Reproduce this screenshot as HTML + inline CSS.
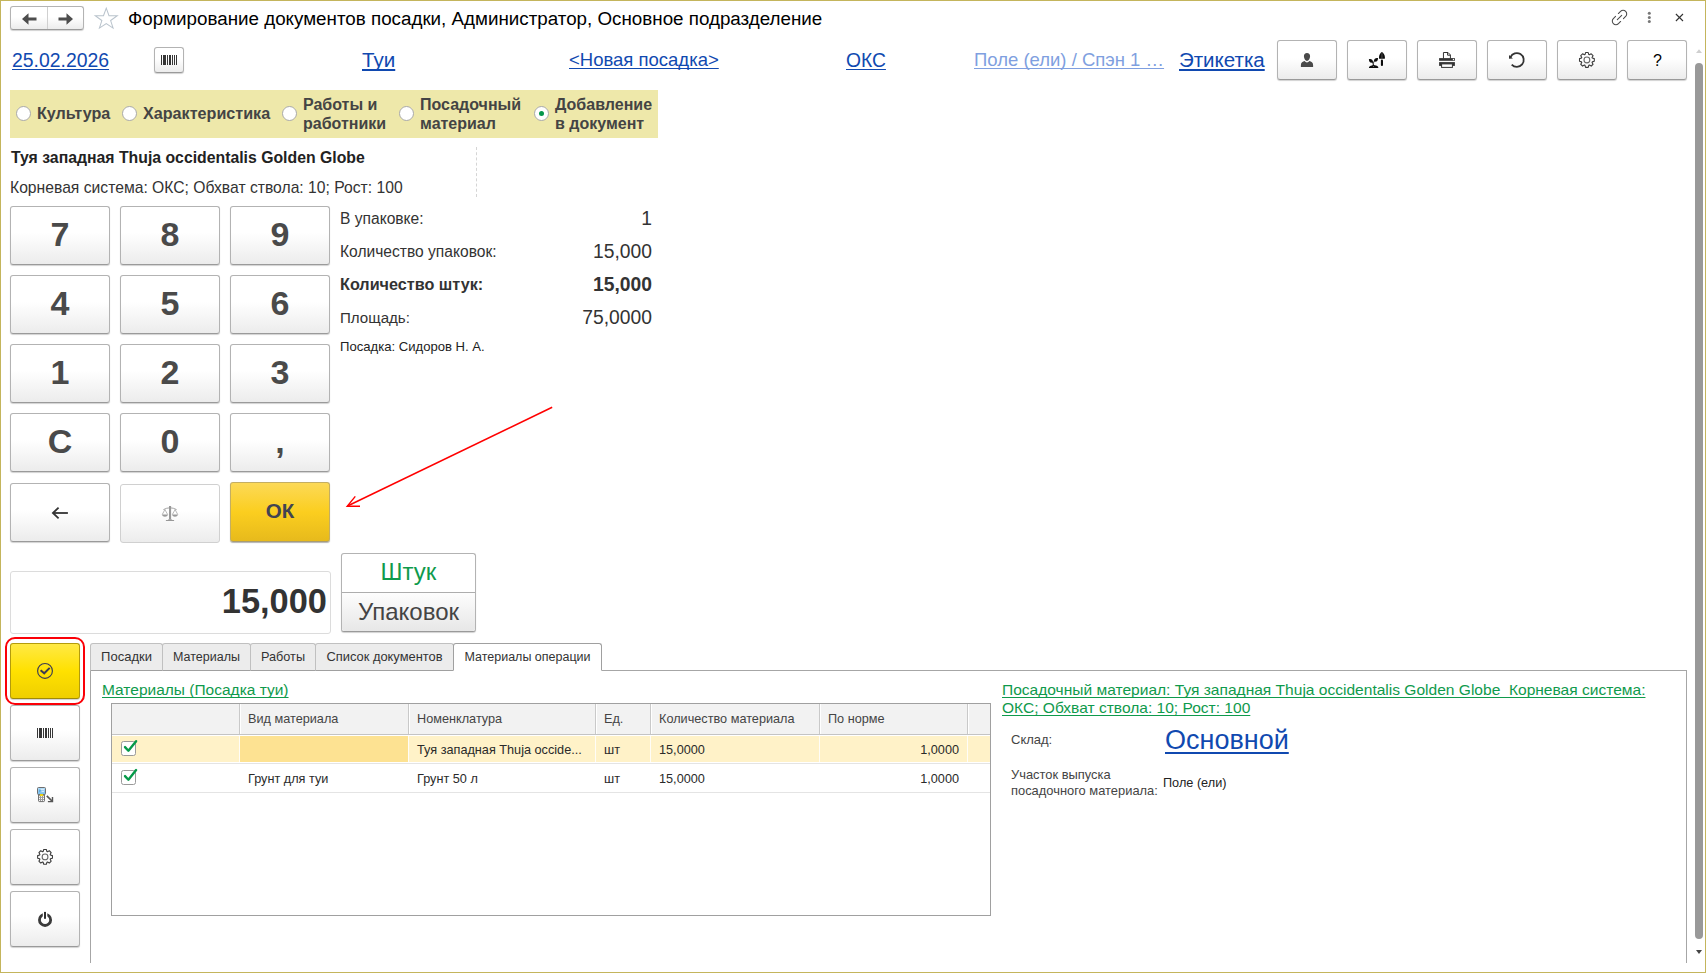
<!DOCTYPE html>
<html lang="ru">
<head>
<meta charset="utf-8">
<title>Формирование документов посадки</title>
<style>
html,body{margin:0;padding:0;}
body{width:1706px;height:973px;overflow:hidden;background:#fff;font-family:"Liberation Sans",sans-serif;color:#333;position:relative;}
#win{position:absolute;left:0;top:0;width:1704px;height:971px;border:1px solid #c4b55c;background:#fff;}
.abs{position:absolute;white-space:nowrap;line-height:1;}
.btn{position:absolute;box-sizing:border-box;border:1px solid #b3b3b3;border-bottom-color:#9a9a9a;border-radius:3px;background:linear-gradient(#ffffff 0%,#ffffff 45%,#ececec 100%);box-shadow:0 1px 1px rgba(0,0,0,0.18);}
.key{width:100px;height:59px;font-weight:bold;font-size:34px;color:#4a4a4a;text-align:center;line-height:55px;}
a.lnk{color:#1049b0;text-decoration:underline;text-decoration-skip-ink:none;text-underline-offset:2px;text-decoration-thickness:1px;}
.tb{width:60px;height:40px;top:40px;}
.sb{left:10px;width:70px;height:56px;}
svg{position:absolute;overflow:visible;}

.rad{position:absolute;box-sizing:border-box;width:15px;height:15px;border:1px solid #a9a9a9;border-radius:50%;background:#fff;}
.rad i{position:absolute;left:4px;top:4px;width:5px;height:5px;border-radius:50%;background:#06974a;}
.rl{font-weight:bold;font-size:16px;color:#444;}
.sl{font-size:15.6px;color:#333;}
.sv{right:1054px;font-size:19.3px;color:#333;text-align:right;}

.tab{position:absolute;top:643px;height:28px;box-sizing:border-box;border:1px solid #c0c0c0;border-bottom:1px solid #a0a0a0;border-radius:3px 3px 0 0;background:#ececec;font-size:12.7px;color:#333;text-align:center;line-height:27px;white-space:nowrap;}
.tab.act{background:#fff;border-color:#a0a0a0;border-bottom-color:#fff;}
a.glnk{color:#0f9a4c;text-decoration:underline;text-decoration-skip-ink:none;text-underline-offset:2px;text-decoration-thickness:1px;}
.vd{position:absolute;top:704px;width:1px;height:30px;background:#c9c9c9;border-right:1px solid #fff;}
.vd:after{content:"";position:absolute;left:0;top:32px;width:1px;height:26px;background:rgba(255,255,255,0.85);}
.th{top:713px;font-size:12.7px;color:#444;}
.td{font-size:12.7px;color:#2a2a2a;}
.cb{position:absolute;box-sizing:border-box;width:15px;height:15px;border:1px solid #9a9a9a;border-radius:2.5px;background:#fff;}
</style>
</head>
<body>
<div id="win"></div>

<!-- title bar -->
<div class="btn" style="left:10px;top:6px;width:74px;height:24px;"></div>
<div class="abs" style="left:47px;top:7px;width:1px;height:22px;background:#d0d0d0;"></div>
<svg style="left:21.5px;top:12.5px" width="16" height="12" viewBox="0 0 16 12"><path d="M0 6 L6.5 0.3 V4.6 H14.5 V7.4 H6.5 V11.7 Z" fill="#4d4d4d"/></svg>
<svg style="left:57.5px;top:12.5px" width="16" height="12" viewBox="0 0 16 12"><path d="M15 6 L8.5 0.3 V4.6 H0.5 V7.4 H8.5 V11.7 Z" fill="#4d4d4d"/></svg>
<svg style="left:93.8px;top:6.6px" width="24.5" height="22.4" viewBox="0 0 24 23" preserveAspectRatio="none"><path d="M12 1.2 L14.7 9 L22.8 9 L16.3 13.9 L18.7 21.7 L12 17 L5.3 21.7 L7.7 13.9 L1.2 9 L9.3 9 Z" fill="#fff" stroke="#b9c3cc" stroke-width="1"/></svg>
<div class="abs" id="title" style="left:128px;top:10px;font-size:18.8px;color:#000;">Формирование документов посадки, Администратор, Основное подразделение</div>

<!-- window icons top right -->
<svg style="left:1609px;top:7px" width="21" height="21" viewBox="-10.5 -10.5 21 21" fill="none" stroke="#4a4a4a" stroke-width="1.05" stroke-linecap="round"><g transform="rotate(-45)"><path d="M2 -3.6 L5.1 -3.6 A3.6 3.6 0 0 1 5.1 3.6 L2 3.6"/><path d="M-2 3.6 L-5.1 3.6 A3.6 3.6 0 0 1 -5.1 -3.6 L-2 -3.6"/><path d="M-3.1 0 L3.1 0"/></g></svg>
<svg style="left:1647px;top:11px" width="5" height="13" viewBox="0 0 5 13" fill="#777"><circle cx="2.3" cy="2.2" r="1.5"/><circle cx="2.3" cy="6.4" r="1.5"/><circle cx="2.3" cy="10.5" r="1.5"/></svg>
<svg style="left:1675px;top:13px" width="9" height="9" viewBox="0 0 9 9" stroke="#333" stroke-width="1.1" fill="none"><path d="M0.9 1 L8 8 M8 1 L0.9 8"/></svg>

<!-- row 2: links & toolbar -->
<a class="lnk abs" id="date" style="left:12px;top:51px;font-size:19.4px;">25.02.2026</a>
<div class="btn" style="left:154px;top:47px;width:30px;height:26px;"></div>
<svg style="left:161px;top:55px" width="16" height="10" viewBox="0 0 16 10" fill="#363636" shape-rendering="crispEdges"><rect x="0" y="0" width="1" height="10"/><rect x="2" y="0" width="3" height="10"/><rect x="6" y="0" width="1" height="10"/><rect x="8" y="0" width="2" height="10"/><rect x="11" y="0" width="1" height="10"/><rect x="13" y="0" width="1" height="10"/><rect x="15" y="0" width="1" height="10"/></svg>
<a class="lnk abs" id="tui" style="left:362px;top:50px;font-size:20.6px;text-decoration-thickness:2px;">Туи</a>
<a class="lnk abs" id="novaya" style="left:569px;top:51px;font-size:18.5px;">&lt;Новая посадка&gt;</a>
<a class="lnk abs" id="oks" style="left:846px;top:51px;font-size:19.3px;">ОКС</a>
<a class="lnk abs" id="pole" style="left:974px;top:51px;font-size:18.5px;color:#7f9fe0;">Поле (ели) / Спэн 1 …</a>
<a class="lnk abs" id="etik" style="left:1179px;top:50px;text-decoration-thickness:2px;font-size:20.5px;">Этикетка</a>
<div class="btn tb" style="left:1277px;"></div>
<div class="btn tb" style="left:1347px;"></div>
<div class="btn tb" style="left:1417px;"></div>
<div class="btn tb" style="left:1487px;"></div>
<div class="btn tb" style="left:1557px;"></div>
<div class="btn tb" style="left:1627px;"></div>

<!-- radio bar -->
<div class="abs" style="left:10px;top:90px;width:648px;height:48px;background:#eee8aa;"></div>
<div class="rad" style="left:16px;top:106px;"></div>
<div class="abs rl" id="r1" style="left:37px;top:105px;font-size:16.15px;">Культура</div>
<div class="rad" style="left:122px;top:106px;"></div>
<div class="abs rl" id="r2" style="left:143px;top:105px;font-size:16.15px;">Характеристика</div>
<div class="rad" style="left:282px;top:106px;"></div>
<div class="abs rl" id="r3" style="left:303px;top:95px;line-height:19px;">Работы и<br>работники</div>
<div class="rad" style="left:399px;top:106px;"></div>
<div class="abs rl" id="r4" style="left:420px;top:95px;line-height:19px;">Посадочный<br>материал</div>
<div class="rad" style="left:534px;top:106px;"><i></i></div>
<div class="abs rl" id="r5" style="left:555px;top:95px;line-height:19px;">Добавление<br>в документ</div>

<!-- item description -->
<div class="abs" id="t1" style="left:11px;top:150px;font-size:15.8px;font-weight:bold;color:#222;">Туя западная Thuja occidentalis Golden Globe</div>
<div class="abs" id="t2" style="left:10px;top:180px;font-size:15.7px;color:#333;">Корневая система: ОКС; Обхват ствола: 10; Рост: 100</div>
<div class="abs" style="left:476px;top:147px;width:0;height:50px;border-left:1px dashed #d5d5d5;"></div>

<!-- keypad -->
<div class="btn key" style="left:10px;top:206px;">7</div>
<div class="btn key" style="left:120px;top:206px;">8</div>
<div class="btn key" style="left:230px;top:206px;">9</div>
<div class="btn key" style="left:10px;top:275px;">4</div>
<div class="btn key" style="left:120px;top:275px;">5</div>
<div class="btn key" style="left:230px;top:275px;">6</div>
<div class="btn key" style="left:10px;top:344px;">1</div>
<div class="btn key" style="left:120px;top:344px;">2</div>
<div class="btn key" style="left:230px;top:344px;">3</div>
<div class="btn key" style="left:10px;top:413px;">C</div>
<div class="btn key" style="left:120px;top:413px;">0</div>
<div class="btn key" style="left:230px;top:413px;">,</div>
<div class="btn key" style="left:10px;top:483px;"></div>
<div class="btn key" style="left:120px;top:484px;height:59px;border-color:#d0d0d0;box-shadow:none;"></div>
<div class="btn key" id="ok" style="left:230px;top:482px;height:60px;border-color:#c4ae62;border-bottom-color:#a99c70;background:linear-gradient(#fcd957 0%,#fbce1f 50%,#e7ba1c 100%);font-size:20.5px;color:#424352;line-height:56px;box-shadow:0 1px 1px rgba(0,0,0,0.3);">ОК</div>
<svg style="left:40px;top:498px" width="40" height="30" viewBox="0 0 40 30" fill="none" stroke="#333" stroke-width="1.8"><path d="M27.9 15 H13"/><path d="M18.6 9.6 L12.9 15 L18.6 20.4" stroke-linejoin="miter"/></svg>
<svg style="left:150px;top:498px" width="40" height="30" viewBox="0 0 40 30" fill="none" stroke="#999"><rect x="19" y="8" width="2.1" height="13.6" fill="#999" stroke="none"/><path d="M15.9 22.5 H24.1" stroke-width="1"/><path d="M18 21.8 H22.1" stroke-width="0.8"/><path d="M13.4 11.6 Q20 8 26.6 11.6" stroke-width="0.9"/><path d="M12.2 16.6 L14.9 11.6 L17.7 16.6 M22.3 16.6 L25.1 11.6 L27.8 16.6" stroke-width="0.7"/><path d="M12 16.5 H17.9 C17.5 19.4 12.4 19.4 12 16.5 Z M22.1 16.5 H27.9 C27.5 19.4 22.5 19.4 22.1 16.5 Z" fill="#999" stroke="none"/></svg>

<!-- summary labels -->
<div class="abs sl" id="s1" style="left:340px;top:211px;">В упаковке:</div>
<div class="abs sv" id="v1" style="top:209px;">1</div>
<div class="abs sl" id="s2" style="left:340px;top:244px;">Количество упаковок:</div>
<div class="abs sv" id="v2" style="top:242px;">15,000</div>
<div class="abs sl" id="s3" style="left:340px;top:276px;font-weight:bold;font-size:16.2px;">Количество штук:</div>
<div class="abs sv" id="v3" style="top:275px;font-weight:bold;">15,000</div>
<div class="abs sl" id="s4" style="left:340px;top:310px;font-size:15.1px;">Площадь:</div>
<div class="abs sv" id="v4" style="top:308px;">75,0000</div>
<div class="abs" id="s5" style="left:340px;top:340px;font-size:13.1px;color:#222;">Посадка: Сидоров Н. А.</div>

<!-- red arrow -->
<svg style="left:340px;top:400px" width="220" height="115" viewBox="340 400 220 115"><path d="M552.2 407.3 L347.5 506" stroke="#ff0000" stroke-width="1.5" fill="none"/><path d="M355.3 496.4 L347.2 506.3 L360 506.3" stroke="#ff0000" stroke-width="1.4" fill="none" stroke-linejoin="miter"/></svg>

<!-- big number + unit switch -->
<div class="abs" style="left:10px;top:571px;width:321px;height:63px;box-sizing:border-box;border:1px solid #dcdcdc;border-radius:3px;background:#fff;"></div>
<div class="abs" id="big" style="left:10px;top:584px;width:317px;text-align:right;font-size:34.4px;font-weight:bold;color:#333;">15,000</div>
<div class="btn" style="left:341px;top:553px;width:135px;height:79px;background:#fff;"></div>
<div class="abs" style="left:342px;top:592px;width:133px;height:38px;background:linear-gradient(#fdfdfd,#e7e7e7);border-top:1px solid #adadad;border-radius:0 0 3px 3px;"></div>
<div class="abs" id="sht" style="left:341px;top:560px;width:135px;text-align:center;font-size:24px;color:#0f9a4c;">Штук</div>
<div class="abs" id="upk" style="left:341px;top:600px;width:135px;text-align:center;font-size:24px;color:#444;">Упаковок</div>

<!-- left sidebar buttons -->
<div class="abs" style="left:5px;top:637px;width:80px;height:68px;box-sizing:border-box;border:2px solid #fb0007;border-radius:10px;"></div>
<div class="btn sb" style="top:643px;border-color:#b39b0c;border-bottom-color:#9f8a08;background:linear-gradient(#ffe945 0%,#ffe100 50%,#efcf00 100%);"></div>
<div class="btn sb" style="top:705px;"></div>
<div class="btn sb" style="top:767px;"></div>
<div class="btn sb" style="top:829px;"></div>
<div class="btn sb" style="top:891px;"></div>
<svg style="left:35px;top:661px" width="20" height="20" viewBox="35 661 20 20" fill="none" stroke="#3b3b52"><circle cx="45" cy="670.9" r="7.4" stroke-width="1.15"/><path d="M40.6 670.3 L44.2 673.3 L49.7 667.9" stroke-width="2"/></svg>
<svg style="left:37px;top:728px" width="16" height="10" viewBox="0 0 16 10" fill="#363636" shape-rendering="crispEdges"><rect x="0" y="0" width="1" height="10"/><rect x="2" y="0" width="3" height="10"/><rect x="6" y="0" width="1" height="10"/><rect x="8" y="0" width="2" height="10"/><rect x="11" y="0" width="1" height="10"/><rect x="13" y="0" width="1" height="10"/><rect x="15" y="0" width="1" height="10"/></svg>
<svg style="left:32px;top:782px" width="26" height="24" viewBox="0 0 26 24"><defs><linearGradient id="scr" x1="0" y1="0" x2="0" y2="1"><stop offset="0" stop-color="#b5ddf7"/><stop offset="1" stop-color="#74b9ea"/></linearGradient></defs><path d="M6.5 12 H12.5 V18.6 Q12.5 19.6 11.5 19.6 H7.5 Q6.5 19.6 6.5 18.6 Z" fill="#9a9a9a" stroke="#666" stroke-width="0.9"/><rect x="5.5" y="5.5" width="8" height="7" rx="1" fill="url(#scr)" stroke="#6e6e6e" stroke-width="1"/><path d="M7.2 7.2 L9.2 8.7 L7.2 10.2 Z" fill="#4fa3df"/><path d="M9 7.4 H12 M9.6 9.6 H12" stroke="#e8f4fc" stroke-width="0.8"/><rect x="7.9" y="12.2" width="3.2" height="1.7" fill="#ffe000"/><g fill="#fff"><rect x="7" y="14.2" width="1" height="1"/><rect x="9" y="14.2" width="1" height="1"/><rect x="11" y="14.2" width="1" height="1"/><rect x="7" y="16" width="1" height="1"/><rect x="9" y="16" width="1" height="1"/><rect x="11" y="16" width="1" height="1"/><rect x="7" y="17.9" width="1" height="1"/><rect x="9" y="17.9" width="1" height="1"/><rect x="11" y="17.9" width="1" height="1"/></g><path d="M14.8 13.9 L20 19" stroke="#555" stroke-width="1.7" fill="none"/><path d="M20.5 14.9 V19.6 H15.9" stroke="#555" stroke-width="1.4" fill="none"/></svg>
<svg style="left:30px;top:844px" width="30" height="28" viewBox="0 0 30 28"><g transform="translate(15.04 12.9)" fill="none" stroke="#3a3a3a" stroke-width="1.1" stroke-linejoin="round"><path d="M1.90 5.37 L1.30 7.39 L-1.30 7.39 L-1.90 5.37 L-2.46 5.14 L-4.30 6.14 L-6.14 4.30 L-5.14 2.46 L-5.37 1.90 L-7.39 1.30 L-7.39 -1.30 L-5.37 -1.90 L-5.14 -2.46 L-6.14 -4.30 L-4.30 -6.14 L-2.46 -5.14 L-1.90 -5.37 L-1.30 -7.39 L1.30 -7.39 L1.90 -5.37 L2.46 -5.14 L4.30 -6.14 L6.14 -4.30 L5.14 -2.46 L5.37 -1.90 L7.39 -1.30 L7.39 1.30 L5.37 1.90 L5.14 2.46 L6.14 4.30 L4.30 6.14 L2.46 5.14 Z"/><circle r="2.9" stroke="#666"/></g></svg>
<svg style="left:30px;top:906px" width="30" height="28" viewBox="0 0 30 28"><defs><clipPath id="pw"><path d="M0 0 H12.8 V14 H17.3 V0 H30 V28 H0 Z"/></clipPath></defs><circle cx="15.04" cy="13.9" r="5.6" fill="none" stroke="#3a3a3a" stroke-width="2.8" clip-path="url(#pw)"/><rect x="14" y="5.9" width="2" height="6.9" fill="#2e2e2e"/></svg>

<!-- tabs -->
<div class="abs" style="left:90px;top:670px;width:1597px;height:293px;box-sizing:border-box;border-left:1px solid #a6a6a6;border-top:1px solid #a6a6a6;border-right:1px solid #a6a6a6;"></div>
<div class="tab" style="left:90px;width:73px;font-size:13px;line-height:25px;">Посадки</div>
<div class="tab" style="left:162px;width:89px;font-size:12.5px;">Материалы</div>
<div class="tab" style="left:250px;width:66px;">Работы</div>
<div class="tab" style="left:315px;width:139px;font-size:12.9px;line-height:25px;">Список документов</div>
<div class="tab act" style="left:453px;width:149px;font-size:12.5px;">Материалы операции</div>

<a class="glnk abs" id="g1" style="left:102px;top:682px;font-size:15.5px;">Материалы (Посадка туи)</a>

<!-- table -->
<div class="abs" style="left:111px;top:703px;width:880px;height:213px;box-sizing:border-box;border:1px solid #a0a0a0;background:#fff;"></div>
<div class="abs" style="left:112px;top:704px;width:878px;height:30px;background:#f2f2f2;border-bottom:1px solid #c4c4c4;"></div>
<div class="abs" style="left:112px;top:736px;width:878px;height:26px;background:#fff2c8;"></div>
<div class="abs" style="left:240px;top:736px;width:168px;height:26px;background:#fde292;"></div>
<div class="abs" style="left:112px;top:763px;width:878px;height:1px;background:#e4e4e4;"></div>
<div class="abs" style="left:112px;top:792px;width:878px;height:1px;background:#e4e4e4;"></div>
<div class="vd" style="left:239px;"></div><div class="vd" style="left:408px;"></div><div class="vd" style="left:595px;"></div><div class="vd" style="left:650px;"></div><div class="vd" style="left:819px;"></div><div class="vd" style="left:967px;"></div>
<div class="abs th" style="left:248px;">Вид материала</div>
<div class="abs th" style="left:417px;">Номенклатура</div>
<div class="abs th" style="left:604px;">Ед.</div>
<div class="abs th" id="thk" style="left:659px;">Количество материала</div>
<div class="abs th" style="left:828px;">По норме</div>
<div class="abs td" id="td1" style="left:417px;top:744px;">Туя западная Thuja occide...</div>
<div class="abs td" style="left:604px;top:744px;">шт</div>
<div class="abs td" style="left:659px;top:744px;">15,0000</div>
<div class="abs td" style="right:747px;top:744px;">1,0000</div>
<div class="abs td" style="left:248px;top:773px;">Грунт для туи</div>
<div class="abs td" style="left:417px;top:773px;">Грунт 50 л</div>
<div class="abs td" style="left:604px;top:773px;">шт</div>
<div class="abs td" style="left:659px;top:773px;">15,0000</div>
<div class="abs td" style="right:747px;top:773px;">1,0000</div>
<div class="cb" style="left:121px;top:741px;"></div>
<div class="cb" style="left:121px;top:770px;"></div>
<svg style="left:120px;top:736px" width="20" height="20" viewBox="120 736 20 20"><path d="M125 747.1 L128.4 750.7 L136.1 741.2" fill="none" stroke="#069a49" stroke-width="2.4" stroke-linecap="round" stroke-linejoin="round"/></svg>
<svg style="left:120px;top:765px" width="20" height="20" viewBox="120 765 20 20"><path d="M125 776.1 L128.4 779.7 L136.1 770.1" fill="none" stroke="#069a49" stroke-width="2.4" stroke-linecap="round" stroke-linejoin="round"/></svg>

<!-- right panel -->
<a class="glnk abs" id="g2" style="left:1002px;top:681px;font-size:15.55px;line-height:18px;white-space:pre;">Посадочный материал: Туя западная Thuja occidentalis Golden Globe  Корневая система:
ОКС; Обхват ствола: 10; Рост: 100</a>
<div class="abs" style="left:1011px;top:732.5px;font-size:13px;color:#444;">Склад:</div>
<a class="lnk abs" id="osn" style="left:1165px;top:727px;font-size:27px;text-underline-offset:3px;text-decoration-thickness:2px;">Основной</a>
<div class="abs" style="left:1011px;top:767px;font-size:12.9px;line-height:16px;color:#444;">Участок выпуска<br>посадочного материала:</div>
<div class="abs" style="left:1163px;top:777px;font-size:12.7px;color:#222;">Поле (ели)</div>

<!-- scrollbar -->
<svg style="left:1693px;top:48px" width="12" height="8" viewBox="0 0 12 8"><path d="M3 5 L6 1.3 L9 5 Z" fill="#cfcfcf"/></svg>
<div class="abs" style="left:1695px;top:63px;width:8px;height:876px;border-radius:4px;background:#999;"></div>
<svg style="left:1693px;top:948px" width="12" height="8" viewBox="0 0 12 8"><path d="M3 2 L9 2 L6 6 Z" fill="#444"/></svg>

<!-- toolbar icons -->
<svg style="left:1290px;top:46px" width="36" height="28" viewBox="0 0 36 28"><path d="M17 6.9 C19 6.9 20.2 8.5 20.1 10.3 C20 12.5 18.6 14.9 17 14.9 C15.4 14.9 14 12.5 13.9 10.3 C13.8 8.5 15 6.9 17 6.9 Z" fill="#4a4a4a"/><path d="M10.9 20.9 V19 C10.9 16.5 12.8 15.3 14.6 15 C15.3 15.9 16 16.4 17 16.4 C18 16.4 18.7 15.9 19.4 15 C21.2 15.3 23.1 16.5 23.1 19 V20.9 Z" fill="#4a4a4a"/></svg>
<svg style="left:1360px;top:46px" width="36" height="28" viewBox="0 0 36 28" fill="#0c0c0c"><path d="M8.9 13.2 C10.8 12.5 12.9 13.5 13.1 16 C12.5 17 10.2 17 9.4 15.5 C9 14.7 8.9 13.9 8.9 13.2 Z"/><path d="M18 12.1 C16.1 11.5 14 12.5 13.9 15 C14.5 16 16.7 16 17.5 14.5 C17.9 13.7 18 12.9 18 12.1 Z"/><path d="M12.4 16 C13.2 16.6 13.4 17.6 13.4 19.5" fill="none" stroke="#0c0c0c" stroke-width="1.1"/><path d="M14.5 14.6 L13.5 16.8" fill="none" stroke="#0c0c0c" stroke-width="0.9"/><path d="M8.9 22 C8.9 20.4 10.3 19.6 12 19.5 C12.8 19.1 14 18.9 14.7 19.3 C16.6 19.4 18.4 20.3 18.4 22 Z"/><circle cx="13.6" cy="20.5" r="0.45" fill="#bbb"/><path d="M21.9 5.9 C23.2 6.6 24.9 8.8 24.9 11 L24.9 12.2 Q24.9 12.8 24.3 12.8 L19.6 12.8 Q19 12.8 19 12.2 L19 11 C19 8.8 20.6 6.6 21.9 5.9 Z"/><rect x="20.9" y="13.5" width="2.1" height="6.4" rx="1"/><path d="M21.95 7.2 V12.6" stroke="#6a6a6a" stroke-width="0.7"/></svg>
<svg style="left:1430px;top:46px" width="36" height="28" viewBox="0 0 36 28"><path d="M13.45 12.6 V6.5 H18 L20.4 8.9 V12.6" fill="#fff" stroke="#333" stroke-width="1"/><path d="M17.6 6.6 V9.2 H20.3" fill="none" stroke="#333" stroke-width="1"/><rect x="9.1" y="12.1" width="15.8" height="2.7" fill="#333"/><circle cx="23.45" cy="13.5" r="0.7" fill="#fff"/><rect x="9.1" y="16.1" width="15.8" height="3.8" fill="#333"/><rect x="11.6" y="17.9" width="10.8" height="3.5" fill="#fff" stroke="#333" stroke-width="1"/></svg>
<svg style="left:1500px;top:46px" width="36" height="28" viewBox="0 0 36 28"><path d="M10.5 11.2 A6.9 6.9 0 1 1 11.7 18.6" fill="none" stroke="#333" stroke-width="1.8"/><path d="M9 8.9 L9 12.8 L12.9 12.6 Z" fill="#333"/></svg>
<svg style="left:1570px;top:46px" width="36" height="28" viewBox="0 0 36 28"><g transform="translate(16.9 13.95)" fill="none" stroke="#3a3a3a" stroke-width="1.1" stroke-linejoin="round"><path d="M1.90 5.37 L1.30 7.39 L-1.30 7.39 L-1.90 5.37 L-2.46 5.14 L-4.30 6.14 L-6.14 4.30 L-5.14 2.46 L-5.37 1.90 L-7.39 1.30 L-7.39 -1.30 L-5.37 -1.90 L-5.14 -2.46 L-6.14 -4.30 L-4.30 -6.14 L-2.46 -5.14 L-1.90 -5.37 L-1.30 -7.39 L1.30 -7.39 L1.90 -5.37 L2.46 -5.14 L4.30 -6.14 L6.14 -4.30 L5.14 -2.46 L5.37 -1.90 L7.39 -1.30 L7.39 1.30 L5.37 1.90 L5.14 2.46 L6.14 4.30 L4.30 6.14 L2.46 5.14 Z"/><circle r="2.9" stroke="#666"/></g></svg>
<div class="abs" style="left:1627.5px;top:53px;width:60px;text-align:center;font-size:16px;color:#000;">?</div>

</body>
</html>
